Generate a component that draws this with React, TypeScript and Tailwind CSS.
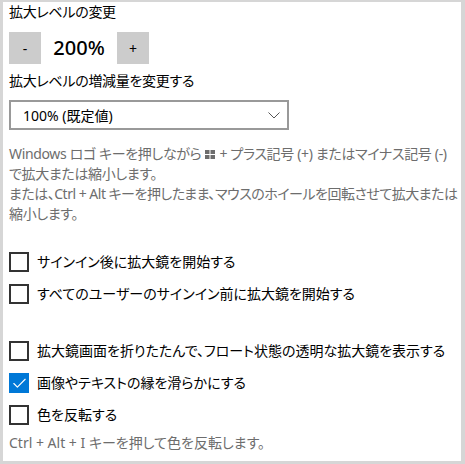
import { Check } from "lucide-react";

const FONT = "[font-family:'Noto_Sans','Noto_Sans_CJK_JP',sans-serif] [font-feature-settings:'palt'] whitespace-nowrap";

function WinLogo() {
  return (
    <svg width="10" height="9" viewBox="0 0 10 9" className="inline-block mx-1 -mt-0.5 align-middle">
      <rect x="0" y="0" width="4.5" height="4" fill="#6d6d6d" />
      <rect x="5.5" y="0" width="4.5" height="4" fill="#6d6d6d" />
      <rect x="0" y="5" width="4.5" height="4" fill="#6d6d6d" />
      <rect x="5.5" y="5" width="4.5" height="4" fill="#6d6d6d" />
    </svg>
  );
}

function CheckRow({ label, checked = false, className = "" }: { label: string; checked?: boolean; className?: string }) {
  return (
    <div className={`flex items-center gap-2 h-5 ${className}`}>
      {checked ? (
        <div className="w-5 h-5 bg-[#0078d7] flex items-center justify-center">
          <Check size={17} strokeWidth={1.6} color="#fff" />
        </div>
      ) : (
        <div className="w-5 h-5 border-2 border-[#333]" />
      )}
      <span className="text-[14px] leading-5 text-black">{label}</span>
    </div>
  );
}

export default function App() {
  return (
    <div className={`w-[465px] h-[464px] overflow-hidden bg-white border-[#d6d6d6] border-l-[3px] border-t-2 border-r-4 border-b-[3px] pl-[6px] ${FONT}`}>
      <div className="text-[14px] text-black leading-5 tracking-[-0.3px]">拡大レベルの変更</div>

      <div className="flex items-center mt-[10px] h-8">
        <button className="w-8 h-8 bg-[#cccccc] text-[14px] text-black">-</button>
        <div className="w-[76px] text-center text-[20px] font-medium text-black">200%</div>
        <button className="w-8 h-8 bg-[#cccccc] text-[14px] text-black">+</button>
      </div>

      <div className="text-[14px] text-black leading-5 mt-[7px] tracking-[-0.3px]">拡大レベルの増減量を変更する</div>

      <div className="mt-[9px] w-[280px] h-[30px] border-2 border-[#999999] flex items-center justify-between pl-3 pr-[7px]">
        <span className="text-[14px] text-black">100% (既定値)</span>
        <svg width="12" height="7" viewBox="0 0 12 7">
          <path d="M0.5 0.5 L6 6 L11.5 0.5" fill="none" stroke="#555" strokeWidth="1" />
        </svg>
      </div>

      <div className="mt-[14px] text-[14px] leading-5 text-[#6d6d6d] tracking-[-0.35px]">
        <div>
          Windows ロゴ キーを押しながら
          <WinLogo />+ プラス記号 (+) またはマイナス記号 (-)
        </div>
        <div>で拡大または縮小します。</div>
        <div className="tracking-[-0.5px]">または、Ctrl + Alt キーを押したまま、マウスのホイールを回転させて拡大または</div>
        <div>縮小します。</div>
      </div>

      <CheckRow className="mt-[28px]" label="サインイン後に拡大鏡を開始する" />
      <CheckRow className="mt-3" label="すべてのユーザーのサインイン前に拡大鏡を開始する" />

      <CheckRow className="mt-[37px]" label="拡大鏡画面を折りたたんで、フロート状態の透明な拡大鏡を表示する" />
      <CheckRow className="mt-3" checked label="画像やテキストの縁を滑らかにする" />
      <CheckRow className="mt-3" label="色を反転する" />

      <div className="mt-2 text-[14px] leading-5 text-[#6d6d6d]">Ctrl + Alt + I キーを押して色を反転します。</div>
    </div>
  );
}
